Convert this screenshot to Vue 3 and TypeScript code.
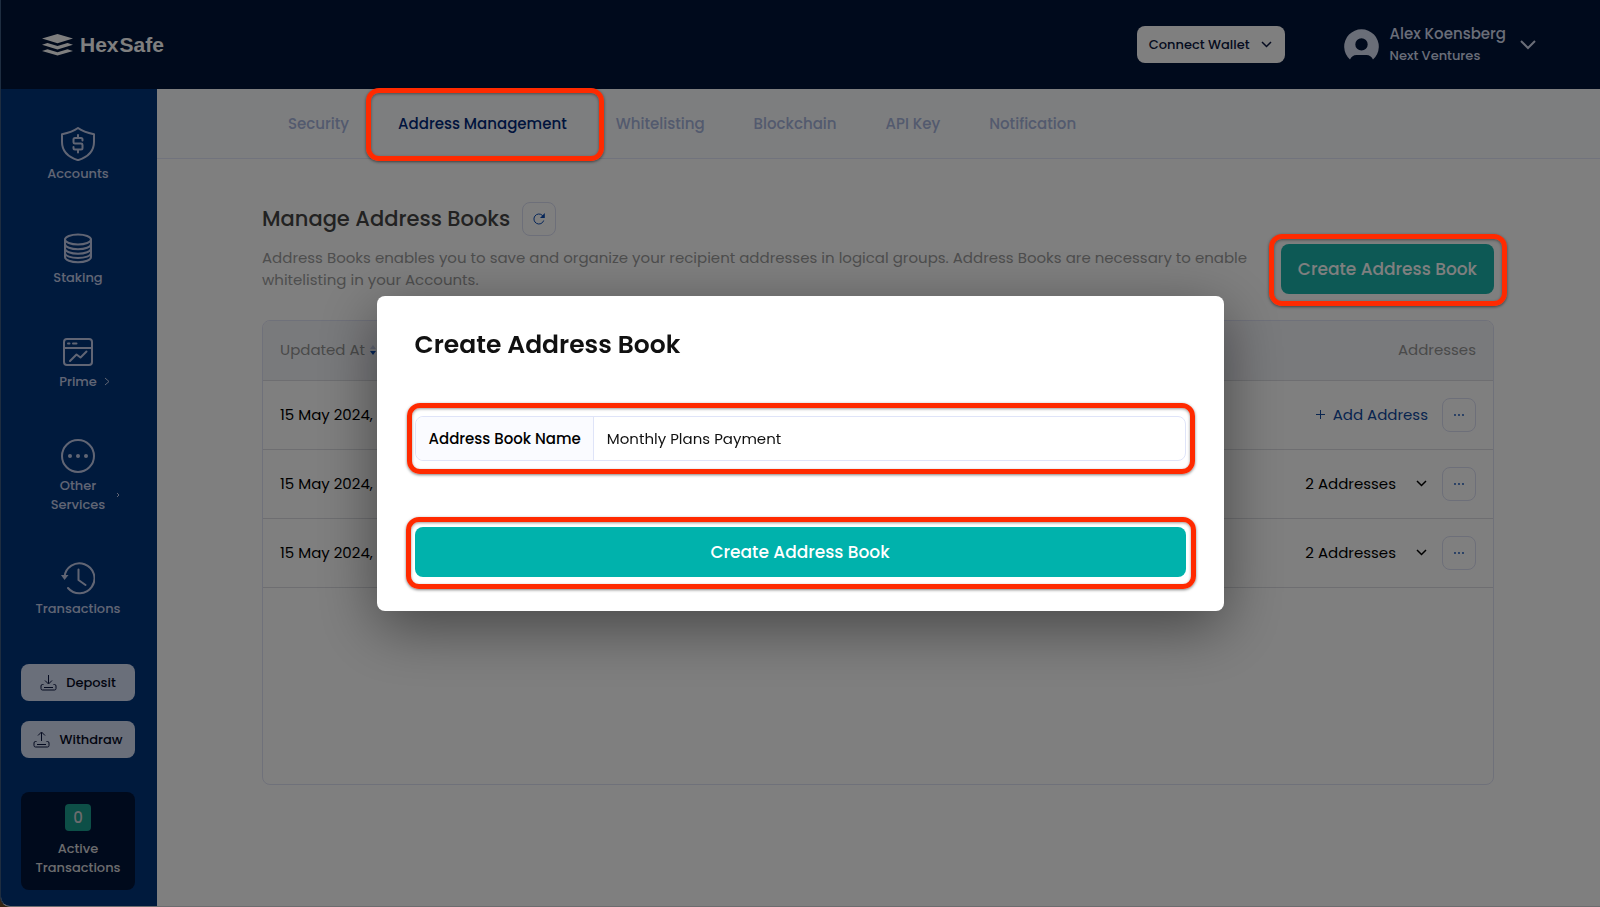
<script setup lang="ts">
import { ref } from 'vue'

interface Tab {
  label: string
  active?: boolean
}

interface BookRow {
  id: number
  updatedAt: string
  count: number
}

const tabs: Tab[] = [
  { label: 'Security' },
  { label: 'Address Management', active: true },
  { label: 'Whitelisting' },
  { label: 'Blockchain' },
  { label: 'API Key' },
  { label: 'Notification' },
]

const rows: BookRow[] = [
  { id: 1, updatedAt: '15 May 2024,', count: 0 },
  { id: 2, updatedAt: '15 May 2024,', count: 2 },
  { id: 3, updatedAt: '15 May 2024,', count: 2 },
]

const bookName = ref('Monthly Plans Payment')
</script>

<template>
  <div class="app">
    <header class="topbar">
      <a class="logo" href="#" aria-label="HexSafe">
        <svg width="31" height="22" viewBox="0 0 31 22" fill="currentColor">
          <path d="M15.500 0 31 4.600 15.500 9.200 0 4.600z" />
          <path d="M0 10.800 5.500 9 15.500 12 25.500 9 31 10.800 15.500 15.400z" />
          <path d="M0 17 5.500 15.200 15.500 18.200 25.500 15.200 31 17 15.500 21.600z" />
        </svg>
        <span class="wordmark"><span>Hex</span><span>Safe</span></span>
      </a>
      <button class="wallet" type="button">
        Connect Wallet
        <svg width="11" height="7" viewBox="0 0 11 7"><path d="M1 1l4.500 4.500L10 1" /></svg>
      </button>
      <button class="user" type="button">
        <svg class="avatar" width="35" height="31" viewBox="0 0 35 31">
          <path
            fill-rule="evenodd"
            d="M6 30.500A17.300 17.300 0 1 1 29 30.500C27.500 27.500 25.500 26 22.500 26H12.500C9.500 26 7.500 27.500 6 30.500ZM17.500 9.200a6.200 6.200 0 1 0 0 12.400a6.200 6.200 0 1 0 0-12.400Z"
          />
        </svg>
        <span class="who">
          <span class="name">Alex Koensberg</span>
          <span class="org">Next Ventures</span>
        </span>
        <svg width="16" height="10" viewBox="0 0 16 10"><path d="M1 1l7 7 7-7" /></svg>
      </button>
    </header>

    <div class="body">
      <aside class="sidebar">
        <nav class="menu">
          <a class="item" href="#">
            <svg width="34" height="34" viewBox="0 0 34 34">
              <path d="M17 1C21 4 27 6 33 7.200V15C33 24 27 30 17 33.200C7 30 1 24 1 15V7.200C7 6 13 4 17 1Z" />
              <path
                d="M21.500 13.500V12.500Q21.500 11 20 11H14Q12.500 11 12.500 12.500V15.200Q12.500 16.600 14 16.600H20Q21.500 16.600 21.500 18V21Q21.500 22.500 20 22.500H14Q12.500 22.500 12.500 21V20M17 8V11M17 22.500V25.500"
              />
            </svg>
            <span>Accounts</span>
          </a>
          <a class="item" href="#">
            <svg width="34" height="34" viewBox="0 0 34 34">
              <ellipse cx="17" cy="8.500" rx="13" ry="5" />
              <path
                d="M4 8.500V26C4 29 10 31.200 17 31.200S30 29 30 26V8.500M4 13C4 16 10 18.200 17 18.200S30 16 30 13M4 17.500C4 20.500 10 22.700 17 22.700S30 20.500 30 17.500M4 22C4 25 10 27 17 27S30 25 30 22"
              />
            </svg>
            <span>Staking</span>
          </a>
          <a class="item" href="#">
            <svg width="34" height="34" viewBox="0 0 34 34">
              <rect x="3" y="4" width="28" height="26" rx="3" />
              <path d="M3 13H31M7 8.500H8.500M12 8.500H15.500M9 26L15.500 19.500L19.500 22.500L25.500 16.500" />
            </svg>
            <span>
              Prime
              <svg class="more" width="6" height="9" viewBox="0 0 6 9"><path d="M1 1l4 3.500L1 8" /></svg>
            </span>
          </a>
          <a class="item" href="#">
            <svg width="34" height="34" viewBox="0 0 34 34">
              <circle cx="17" cy="17" r="16" />
              <g class="solid"><circle cx="9" cy="17" r="2" /><circle cx="17" cy="17" r="2" /><circle cx="25" cy="17" r="2" /></g>
            </svg>
            <span>
              Other<br />Services
              <svg class="more far" width="4" height="6" viewBox="0 0 4 6"><path d="M1 1l2 2-2 2" /></svg>
            </span>
          </a>
          <a class="item" href="#">
            <svg width="34" height="34" viewBox="0 0 34 34">
              <path d="M3.500 15A15 15 0 1 1 7 26M17.500 7.500V18L24.500 23" />
              <path class="solid" d="M0 13H7.500L3.500 18Z" />
            </svg>
            <span>Transactions</span>
          </a>
        </nav>

        <div class="actions">
          <button type="button">
            <svg width="17" height="17" viewBox="0 0 17 17">
              <path d="M8.500 1V9.500M5 6.500L8.500 10L12 6.500M3.500 10.500H2.500Q1 10.500 1 12V14.500Q1 16 2.500 16H14.500Q16 16 16 14.500V12Q16 10.500 14.500 10.500H13.500M4 13.500H13" />
            </svg>
            Deposit
          </button>
          <button type="button">
            <svg width="17" height="17" viewBox="0 0 17 17">
              <path d="M8.500 10V1.500M5 4.500L8.500 1L12 4.500M3.500 10.500H2.500Q1 10.500 1 12V14.500Q1 16 2.500 16H14.500Q16 16 16 14.500V12Q16 10.500 14.500 10.500H13.500M4 13.500H13" />
            </svg>
            Withdraw
          </button>
        </div>

        <div class="pending">
          <span class="badge">0</span>
          <span>Active<br />Transactions</span>
        </div>
      </aside>

      <main class="main">
        <nav class="tabs">
          <a v-for="tab in tabs" :key="tab.label" href="#" :class="['tab', { active: tab.active }]">
            {{ tab.label }}
            <span v-if="tab.active" class="frame tab-frame"></span>
          </a>
        </nav>

        <section class="content">
          <div class="intro">
            <div class="intro-text">
              <h1>
                Manage Address Books
                <button class="square" type="button" aria-label="Refresh">
                  <svg width="12" height="12" viewBox="0 0 12 12">
                    <path d="M10.700 7.500A5 5 0 1 1 9.500 2.500L11 4" />
                    <path class="solid" d="M11.800 0V5H7Z" />
                  </svg>
                </button>
              </h1>
              <p>
                Address Books enables you to save and organize your recipient addresses in logical groups. Address
                Books are necessary to enable whitelisting in your Accounts.
              </p>
            </div>
            <button class="primary create" type="button">
              Create Address Book
              <span class="frame create-frame"></span>
            </button>
          </div>

          <div class="card">
            <table>
              <thead>
                <tr>
                  <th scope="col">
                    <span class="sort">
                      Updated At
                      <svg width="6" height="10" viewBox="0 0 6 10">
                        <path class="up" d="M0 4L3 0L6 4Z" />
                        <path class="down" d="M0 6H6L3 10Z" />
                      </svg>
                    </span>
                  </th>
                  <th scope="col" class="right">Addresses</th>
                </tr>
              </thead>
              <tbody>
                <tr v-for="row in rows" :key="row.id">
                  <td>{{ row.updatedAt }}</td>
                  <td>
                    <div class="cell">
                      <button v-if="row.count === 0" class="link add" type="button">
                        <svg width="9" height="9" viewBox="0 0 9 9"><path d="M4.500 0V9M0 4.500H9" /></svg>
                        Add Address
                      </button>
                      <button v-else class="link count" type="button">
                        {{ row.count }} Addresses
                        <svg width="11" height="7" viewBox="0 0 11 7"><path d="M1 1l4.500 4.500L10 1" /></svg>
                      </button>
                      <button class="square" type="button" aria-label="More options">
                        <svg width="10" height="2" viewBox="0 0 10 2">
                          <g class="solid"><circle cx="1" cy="1" r="0.900" /><circle cx="5" cy="1" r="0.900" /><circle cx="9" cy="1" r="0.900" /></g>
                        </svg>
                      </button>
                    </div>
                  </td>
                </tr>
              </tbody>
            </table>
          </div>
        </section>
      </main>
    </div>

    <div class="overlay">
      <form class="modal" role="dialog" aria-labelledby="modal-title" @submit.prevent>
        <h2 id="modal-title">Create Address Book</h2>
        <div class="field">
          <label for="book-name">Address Book Name</label>
          <input id="book-name" v-model="bookName" type="text" />
          <span class="frame field-frame"></span>
        </div>
        <button class="primary submit" type="submit">
          Create Address Book
          <span class="frame submit-frame"></span>
        </button>
      </form>
    </div>
  </div>
</template>

<style>
body {
  margin: 0;
  background: #6b4a26;
}
</style>

<style scoped>
* {
  box-sizing: border-box;
}

.app {
  display: flex;
  flex-direction: column;
  min-height: 100vh;
  overflow: hidden;
  border-bottom: 1px solid #d8d8dc;
  border-left: 1px solid #3d5a80;
  border-bottom-left-radius: 10px;
  background: #fff;
  color: #000;
  font-family: Poppins, Inter, sans-serif;
  font-size: 15px;
  line-height: 22px;
}

button {
  display: flex;
  align-items: center;
  justify-content: center;
  padding: 0;
  border: 0;
  background: none;
  color: inherit;
  font: inherit;
  white-space: nowrap;
  cursor: pointer;
}

a {
  color: inherit;
  text-decoration: none;
}

svg {
  flex: none;
  fill: none;
  stroke: currentColor;
}

svg .solid {
  fill: currentColor;
  stroke: none;
}

.topbar {
  display: flex;
  align-items: center;
  height: 89px;
  padding: 0 64px 0 41px;
  background: #001439;
}

.logo {
  display: flex;
  align-items: center;
  gap: 7px;
  margin-right: auto;
  color: #fff;
}

.logo svg {
  fill: currentColor;
  stroke: none;
}

.wordmark {
  display: flex;
  gap: 1px;
  font-family: "Liberation Sans", Arial, sans-serif;
  font-size: 21px;
  font-weight: 700;
}

.wallet {
  gap: 11px;
  height: 37px;
  padding: 0 13px 0 12px;
  border-radius: 8px;
  background: #fff;
  color: #0a1640;
  font-size: 13px;
  font-weight: 500;
}

.wallet svg {
  stroke-width: 1.5;
}

.user {
  gap: 14px;
  margin-left: 59px;
  color: #d5dcf0;
  text-align: left;
}

.user svg {
  stroke-width: 2;
}

.user .avatar {
  fill: currentColor;
  stroke: none;
}

.who {
  display: flex;
  flex-direction: column;
  margin-left: -3px;
}

.name {
  font-size: 15px;
  font-weight: 500;
}

.org {
  font-size: 13px;
  font-weight: 500;
}

.body {
  display: flex;
  flex: 1;
}

.sidebar {
  display: flex;
  flex: none;
  flex-direction: column;
  width: 156px;
  padding: 38px 22px 16px 20px;
  background: #00347a;
  color: #c2cbe8;
  font-size: 13px;
  font-weight: 500;
  line-height: 19px;
  text-align: center;
}

.menu {
  display: flex;
  flex-direction: column;
  gap: 48px;
}

.item {
  display: flex;
  flex-direction: column;
  align-items: center;
  gap: 3px;
}

.item > svg {
  stroke-width: 2;
  stroke-linecap: round;
  stroke-linejoin: round;
}

.item > span {
  position: relative;
}

.more {
  position: absolute;
  right: -13px;
  bottom: 5px;
}

.far {
  right: -15px;
  bottom: 16px;
}

.actions {
  display: flex;
  flex-direction: column;
  gap: 20px;
  margin: 46px 0 34px;
}

.actions button {
  gap: 9px;
  height: 37px;
  border-radius: 8px;
  background: #d5def5;
  color: #050a1e;
}

.actions svg {
  stroke: #0a1640;
}

.pending {
  display: flex;
  flex-direction: column;
  align-items: center;
  gap: 8px;
  padding: 12px 0 13px;
  border-radius: 8px;
  background: #001439;
  color: #d8d8dc;
}

.badge {
  width: 26px;
  border-radius: 4px;
  background: #1a9e8e;
  font-size: 15px;
  line-height: 27px;
}

.main {
  display: flex;
  flex: 1;
  flex-direction: column;
  min-width: 0;
}

.tabs {
  display: flex;
  gap: 49px;
  height: 70px;
  padding: 0 131px;
  border-bottom: 1px solid #e3e6fa;
  background: #fbfcff;
  color: #a6b4dc;
  font-weight: 500;
  line-height: 69px;
}

.tab {
  position: relative;
}

.tab.active {
  color: #00297a;
}

.frame {
  position: absolute;
  z-index: 20;
  border: 5px solid #ff2a00;
  border-radius: 13px;
  box-shadow: 0 1px 3px rgba(0, 0, 0, 0.5), inset 0 1px 3px rgba(0, 0, 0, 0.4);
  pointer-events: none;
}

.tab-frame {
  inset: -1px -37px -3px -32px;
}

.create-frame {
  inset: -10px -13px -12px -12px;
}

.field-frame {
  inset: -14px -10px -14px -9px;
}

.submit-frame {
  inset: -10px -10px -12px -9px;
}

.content {
  display: flex;
  flex: 1;
  flex-direction: column;
  padding: 43px 106px 121px 105px;
}

.intro {
  display: flex;
  align-items: flex-start;
  justify-content: space-between;
  gap: 24px;
}

h1 {
  display: flex;
  align-items: center;
  gap: 12px;
  margin: 0;
  color: #444;
  font-size: 21px;
  font-weight: 500;
}

p {
  max-width: 990px;
  margin: 11px 0 0;
  color: #9c9c9c;
}

.square {
  width: 34px;
  height: 34px;
  border: 1px solid #dadef2;
  border-radius: 8px;
  color: #0b4bb3;
}

.primary {
  position: relative;
  height: 50px;
  border-radius: 8px;
  background: #00b2ac;
  color: #fff;
  font-size: 17px;
  font-weight: 500;
}

.create {
  flex: none;
  padding: 0 17px;
  margin-top: 42px;
  background: #1ab3aa;
}

.card {
  flex: 1;
  margin-top: 26px;
  overflow: hidden;
  border: 1px solid #dfe2f5;
  border-radius: 8px;
}

table {
  width: 100%;
  border-collapse: collapse;
}

th {
  height: 59px;
  padding: 0 17px;
  background: #f3f4f9;
  color: #949494;
  font-weight: 400;
  text-align: left;
}

.right {
  text-align: right;
}

td {
  height: 69px;
  padding: 0 17px;
}

tr {
  border-bottom: 1px solid #dcdde2;
}

.sort {
  display: flex;
  align-items: center;
  gap: 5px;
}

.up {
  fill: #c3cce8;
  stroke: none;
}

.down {
  fill: #0b4bb3;
  stroke: none;
}

.cell {
  display: flex;
  justify-content: flex-end;
}

.add {
  gap: 8px;
  margin-right: 14px;
  color: #124a9e;
}

.count {
  gap: 20px;
  margin-right: 15px;
}

.count svg {
  stroke-width: 1.5;
}

.overlay {
  position: fixed;
  z-index: 10;
  inset: 0;
  display: flex;
  align-items: center;
  justify-content: center;
  background: rgba(0, 0, 0, 0.5);
}

.modal {
  display: flex;
  flex-direction: column;
  width: 847px;
  padding: 32px 38px 34px;
  border-radius: 8px;
  background: #fff;
  box-shadow: 0 16px 60px rgba(0, 0, 0, 0.45);
}

h2 {
  margin: 0 0 54px;
  color: #111;
  font-size: 25px;
  font-weight: 600;
  line-height: 34px;
}

.field {
  position: relative;
  display: flex;
  height: 45px;
  margin-bottom: 66px;
  border: 1px solid #dfe4f8;
  border-radius: 8px;
}

.field label {
  padding: 0 12px 0 13px;
  border-right: 1px solid #dfe4f8;
  border-radius: 8px 0 0 8px;
  background: #fafbff;
  font-weight: 500;
  line-height: 43px;
}

.field input {
  flex: 1;
  min-width: 0;
  padding: 0 13px;
  border: 0;
  outline: 0;
  background: none;
  color: #111;
  font: inherit;
}
</style>
